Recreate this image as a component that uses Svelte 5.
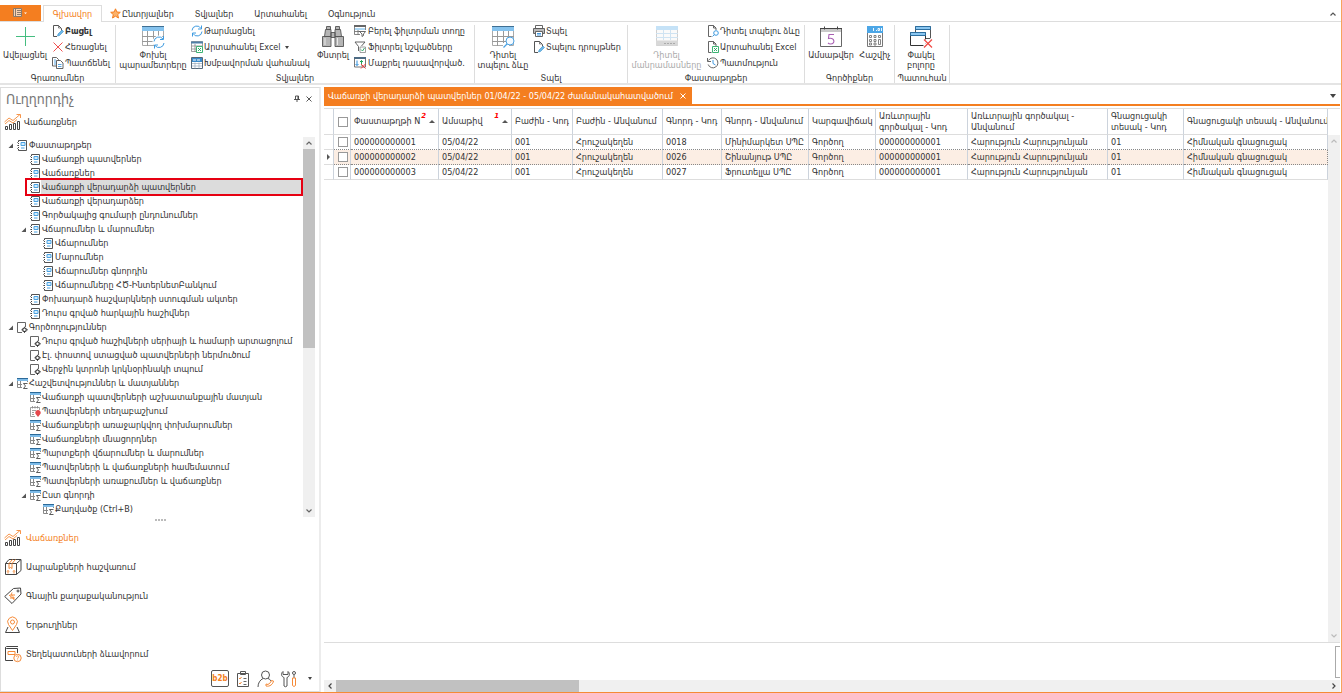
<script>
  const tabs = ['Գլխավոր', 'Ընտրյալներ', 'Տվյալներ', 'Արտահանել', 'Օգնություն'];
  const groups = [
    { id: 'records', title: 'Գրառումներ', parts: [
      { big: 'plus', id: 'add', lines: ['Ավելացնել'] },
      { small: [['open', 'Բացել', 'strong'], ['cross', 'Հեռացնել'], ['copy', 'Պատճենել']] }
    ] },
    { id: 'data', title: 'Տվյալներ', parts: [
      { big: 'params', id: 'params', lines: ['Փոխել', 'պարամետրերը'] },
      { small: [['refresh', 'Թարմացնել'], ['tablexls', 'Արտահանել Excel', 'drop'], ['grouping', 'Խմբավորման վահանակ']] },
      { big: 'find', id: 'find', lines: ['Փնտրել'] },
      { small: [['filterrow', 'Բերել ֆիլտրման տողը'], ['filter', 'Ֆիլտրել նշվածները'], ['clearsort', 'Մաքրել դասավորված.']] }
    ] },
    { id: 'print', title: 'Տպել', parts: [
      { big: 'preview', id: 'preview', lines: ['Դիտել', 'տպելու ձևը'] },
      { small: [['printer', 'Տպել'], ['printset', 'Տպելու դրույթներ']] }
    ] },
    { id: 'docs', title: 'Փաստաթղթեր', parts: [
      { big: 'details', id: 'details', lines: ['Դիտել', 'մանրամասները'], disabled: true },
      { small: [['docview', 'Դիտել տպելու ձևը'], ['docxls', 'Արտահանել Excel'], ['history', 'Պատմություն']] }
    ] },
    { id: 'tools', title: 'Գործիքներ', parts: [
      { big: 'calendar', id: 'calendar', lines: ['Ամսաթվեր'] },
      { big: 'calc', id: 'calc', lines: ['Հաշվիչ'] }
    ] },
    { id: 'window', title: 'Պատուհան', parts: [
      { big: 'closeall', id: 'closeall', lines: ['Փակել', 'բոլորը'] }
    ] }
  ];
  const tree = [
    [0, 'doc', 'Փաստաթղթեր', true],
    [1, 'doc', 'Վաճառքի պատվերներ'],
    [1, 'doc', 'Վաճառքներ'],
    [1, 'doc', 'Վաճառքի վերադարձի պատվերներ'],
    [1, 'doc', 'Վաճառքի վերադարձեր'],
    [1, 'doc', 'Գործակալից գումարի ընդունումներ'],
    [1, 'doc', 'Վճարումներ և մարումներ', true],
    [2, 'doc', 'Վճարումներ'],
    [2, 'doc', 'Մարումներ'],
    [2, 'doc', 'Վճարումներ գնորդին'],
    [2, 'doc', 'Վճարումները ՀԾ-ԻնտերնետԲանկում'],
    [1, 'doc', 'Փոխադարձ հաշվարկների ստուգման ակտեր'],
    [1, 'doc', 'Դուրս գրված հարկային հաշիվներ'],
    [0, 'task', 'Գործողություններ', true],
    [1, 'task', 'Դուրս գրված հաշիվների սերիայի և համարի արտացոլում'],
    [1, 'task', 'Էլ. փոստով ստացված պատվերների ներմուծում'],
    [1, 'task', 'Վերջին կտրոնի կրկնօրինակի տպում'],
    [0, 'report', 'Հաշվետվություններ և մատյաններ', true],
    [1, 'report', 'Վաճառքի պատվերների աշխատանքային մատյան'],
    [1, 'place', 'Պատվերների տեղաբաշխում'],
    [1, 'report', 'Վաճառքների առաջարկվող փոխմարումներ'],
    [1, 'report', 'Վաճառքների մնացորդներ'],
    [1, 'report', 'Պարտքերի վճարումներ և մարումներ'],
    [1, 'report', 'Պատվերների և վաճառքների համեմատում'],
    [1, 'report', 'Պատվերների առաքումներ և վաճառքներ'],
    [1, 'report', 'Ըստ գնորդի', true],
    [2, 'report', 'Քաղվածք (Ctrl+B)']
  ];
  const sections = [
    ['chart', 'Վաճառքներ'],
    ['box', 'Ապրանքների հաշվառում'],
    ['tag', 'Գնային քաղաքականություն'],
    ['pin', 'Երթուղիներ'],
    ['book', 'Տեղեկատուների ձևավորում']
  ];
  const columns = [
    { t: ['Փաստաթղթի N'], w: 88, sort: 2 },
    { t: ['Ամսաթիվ'], w: 73, sort: 1 },
    { t: ['Բաժին - Կոդ'], w: 61 },
    { t: ['Բաժին - Անվանում'], w: 90 },
    { t: ['Գնորդ - Կոդ'], w: 59 },
    { t: ['Գնորդ - Անվանում'], w: 87 },
    { t: ['Կարգավիճակ'], w: 67 },
    { t: ['Առևտրային', 'գործակալ - Կոդ'], w: 92 },
    { t: ['Առևտրային գործակալ -', 'Անվանում'], w: 140 },
    { t: ['Գնացուցակի', 'տեսակ - Կոդ'], w: 76 },
    { t: ['Գնացուցակի տեսակ - Անվանում'], w: 0 }
  ];
  const tail = ['Գործող', '000000000001', 'Հարություն Հարությունյան', '01', 'Հիմնական գնացուցակ'];
  const rows = [
    ['000000000001', '05/04/22', '001', 'Հրուշակեղեն', '0018', 'Մինիմարկետ ՍՊԸ', ...tail],
    ['000000000002', '05/04/22', '001', 'Հրուշակեղեն', '0026', 'Շինանյութ ՍՊԸ', ...tail],
    ['000000000003', '05/04/22', '001', 'Հրուշակեղեն', '0027', 'Ֆրուտելլա ՍՊԸ', ...tail]
  ];
  let selected = $state(3);
  let current = $state(1);
</script>

{#snippet sheet(accent)}
  <path d="M1.500 1.500h21v19h-21z" fill="#fff" stroke="#aaa" />
  <path d="M1 11.500h22M1 16.500h22M6.500 6v15M12.500 6v15M17.500 6v15" stroke="#999" fill="none" />
  <path d="M1 1h22v5H1z" fill={accent} />
  <path d="M1 1.500h22" stroke="#3f6f93" />
{/snippet}

{#snippet icon(name)}
  {#if name === 'plus'}
    <svg width="24" height="24" viewBox="0 0 24 24"><path d="M12.500 2v19M3 11.500h19" stroke="#45bd80" /></svg>
  {:else if name === 'params'}
    <svg width="24" height="24" viewBox="0 0 24 24">{@render sheet('#86c3ee')}<circle cx="18" cy="17" r="6.500" fill="#fff" /><path d="M13 16.500a5 5 0 0 1 9-2.500m.5-3v3.500H19M23 18a5 5 0 0 1-9 2.500m-.5 3V20H17" fill="none" stroke="#3f9be0" /></svg>
  {:else if name === 'preview'}
    <svg width="24" height="24" viewBox="0 0 24 24">{@render sheet('#86c3ee')}<path d="M12 18h6v5h-6z" fill="#fff" /><circle cx="19" cy="16" r="4" fill="#f4faff" stroke="#4ba2e2" /><path d="M16 19l-3.500 3.500" stroke="#4ba2e2" stroke-width="1.300" /></svg>
  {:else if name === 'find'}
    <svg width="24" height="24" viewBox="0 0 24 24" fill="#b5b5b5" stroke="#555" stroke-width=".9"><path d="M5.500 1.500h4v3h-4zM14.500 1.500h4v3h-4zM4.500 4.500H10v7H3.500zM14 4.500h5.500l1 7H14zM1.500 11.500h8.500v10H1.500zM14 11.500h8.500v10H14zM10 7.500h4v5h-4z" /><path d="M4 13v7M16.500 13v7" stroke="#eee" /></svg>
  {:else if name === 'details'}
    <svg width="24" height="24" viewBox="0 0 24 24"><path d="M1.500 1.500h21v19h-21z" fill="#fafafa" stroke="#d0d0d0" /><path d="M1 1h22v4H1z" fill="#c5e2f7" /><path d="M1 8.500h22M1 12.500h22M8.500 5v10M15.500 5v10" stroke="#cfe3f2" /><path d="M1 15.500h22v5H1z" fill="#d8d8d8" /><path d="M9 18.500h12" stroke="#aaa" stroke-dasharray="2 1" /></svg>
  {:else if name === 'calendar'}
    <svg width="24" height="24" viewBox="0 0 24 24"><path d="M1.500 3.500h21v18h-21z" fill="#fff" stroke="#666" /><path d="M2 3h20v4H2z" fill="#c9c9c9" /><path d="M1 3.500h22M5.500 1.500v3M18.500 1.500v3" stroke="#444" /><path d="M15 9.500h-5l-.5 4c6-1.500 7.500 5.500 2 5.500-1.500 0-2-.5-2.500-1" fill="none" stroke="#a95fb3" stroke-width="1.100" /></svg>
  {:else if name === 'calc'}
    <svg width="24" height="24" viewBox="0 0 24 24"><path d="M4.500 1.500h15v20h-15z" fill="#fff" stroke="#777" /><path d="M4 1h16v7H4z" fill="#4ca6e6" /><path d="M10.500 3v3M13 5.500h1M15 3.500h1.500v2H15zM18.500 3v3" stroke="#fff" fill="none" stroke-width=".9" /><path d="M6.500 10.500h2v2h-2zM11 10.500h2v2h-2zM15.500 10.500h2v2h-2zM6.500 14.500h2v2h-2zM11 14.500h2v2h-2zM15.500 14.500h2v5h-2zM6.500 18h2v2h-2zM11 18h2v2h-2z" fill="none" stroke="#777" stroke-width=".9" /></svg>
  {:else if name === 'closeall'}
    <svg width="24" height="24" viewBox="0 0 24 24" stroke="#555"><path d="M6.500 1.500h15v12h-15z" fill="#fff" /><path d="M6.500 1.500h15v3h-15z" fill="#8ac6f0" stroke="#2e6f9f" /><path d="M1.500 7.500h15v13h-15z" fill="#fff" stroke="#333" /><path d="M1.500 7.500h15v3h-15z" fill="#8ac6f0" stroke="#2e6f9f" /><path d="M14 14l9 9M23 14l-9 9" stroke="#fff" stroke-width="3" /><path d="M15 14.500l8 8M23 14.500l-8 8" stroke="#f04a44" stroke-width="1.200" /></svg>
  {:else if name === 'open' || name === 'printset'}
    <svg width="12" height="12" viewBox="0 0 12 12" fill="none"><path d="M5 11.500H1.500V.5h5L9.500 3.500v2" stroke="#555" /><path d="M6.500 .5V3H9" stroke="#555" stroke-width=".7" /><path d="M5.500 11l.5-2 4-4 1.500 1.500-4 4z" fill="#6bb8ea" stroke="#2880bd" stroke-width=".5" /></svg>
  {:else if name === 'cross'}
    <svg width="12" height="12" viewBox="0 0 12 12"><path d="M1.500 1.500l9 9M10.500 1.500l-9 9" stroke="#f05050" /></svg>
  {:else if name === 'copy'}
    <svg width="12" height="12" viewBox="0 0 12 12" stroke="#555" stroke-width=".9"><path d="M.5 .5h4l2 2V9h-6z" fill="#fff" /><path d="M4.500 3.500h4l2.500 2.500v5.500H4.500z" fill="#fff" /><path d="M6 7.500h3.500M6 9.500h3.500M2 3h2M2 5h2M2 7h2" stroke="#2e8fdc" stroke-width=".8" /></svg>
  {:else if name === 'refresh'}
    <svg width="12" height="12" viewBox="0 0 12 12"><path d="M1 5.500A4.800 4.800 0 0 1 10 3.500M10.500 .5v3.500H7M11 6.500A4.800 4.800 0 0 1 2 8.500M1.500 11.500V8H5" fill="none" stroke="#3f9be0" /></svg>
  {:else if name === 'tablexls' || name === 'docxls'}
    <svg width="12" height="12" viewBox="0 0 12 12" fill="none">{#if name === 'tablexls'}<path d="M.5 .5h11v10H.5zM.5 5h11M.5 8h11M4 3v8" stroke="#888" stroke-width=".8" /><path d="M0 .5h12v2H0z" fill="#4f7fa6" />{:else}<path d="M4.500 11.500h-3V.5h5L9 3v2M6.500 .5V3H9" stroke="#555" stroke-width=".9" />{/if}<path d="M5.500 5.500h6v6h-6z" fill="#fff" stroke="#3db473" /><path d="M7 7l3 3M10 7l-3 3" stroke="#22a45c" stroke-width=".9" /></svg>
  {:else if name === 'grouping'}
    <svg width="12" height="12" viewBox="0 0 12 12"><path d="M.5 .5h11v11H.5z" fill="#fff" stroke="#567" /><path d="M1 1h10v4H1z" fill="#3b8bca" /><path d="M2 3h3M6 3h3" stroke="#fff" /><path d="M1 6.500h10M1 9h10M4 5.500v6M8 5.500v6" stroke="#9ab" stroke-width=".7" /></svg>
  {:else if name === 'filterrow'}
    <svg width="12" height="12" viewBox="0 0 12 12" fill="none"><path d="M6 9.500H.5V.5h11V5M.5 6.500H6M4 5v4.500" stroke="#666" stroke-width=".8" /><path d="M0 0h12v2H0z" fill="#666" /><path d="M1 4h10" stroke="#5bb0ea" /><path d="M5.500 6.500h6l-2 2.500v1.500l-1.500 1V9z" fill="#fff" stroke="#444" stroke-width=".8" /></svg>
  {:else if name === 'filter'}
    <svg width="12" height="12" viewBox="0 0 12 12" fill="none"><path d="M1 1h10L7.500 5M1 1l3.500 4.500V10" stroke="#555" stroke-width=".9" /><path d="M6 6h5.500v5.500H6z" fill="#fff" stroke="#888" stroke-width=".8" /><path d="M7 8.500l1.500 1.500L10.500 7" stroke="#22a45c" stroke-width=".9" /></svg>
  {:else if name === 'clearsort'}
    <svg width="12" height="12" viewBox="0 0 12 12" fill="none"><path d="M.5 .5h11V10H.5z" stroke="#666" stroke-width=".9" /><path d="M0 0h12v2H0z" fill="#4d6b84" /><path d="M3 3.500v5M1.500 7L3 8.500 4.500 7" stroke="#2e8fdc" /><path d="M7.500 8.500v-5M6 5l1.500-1.500L9 5" stroke="#22a45c" /><path d="M7 7l4.500 4.500M11.500 7L7 11.500" stroke="#f0383c" /></svg>
  {:else if name === 'printer'}
    <svg width="12" height="12" viewBox="0 0 12 12" stroke="#555" stroke-width=".9"><path d="M2.500 .5h7v3h-7z" fill="#fff" /><path d="M.5 3.500h11v5H.5z" fill="#b9b9b9" /><path d="M2.500 6.500h7v5h-7z" fill="#fff" /><path d="M4 8.500h4M4 10h4" stroke="#2e8fdc" /></svg>
  {:else if name === 'docview'}
    <svg width="12" height="12" viewBox="0 0 12 12" fill="none"><path d="M4.500 11.500h-3V.5h5L9 3v2M6.500 .5V3H9" stroke="#555" stroke-width=".9" /><circle cx="9" cy="8" r="2.300" stroke="#3f9be0" /><path d="M7.500 9.500l-2 2" stroke="#3f9be0" /></svg>
  {:else if name === 'history'}
    <svg width="12" height="12" viewBox="0 0 12 12" fill="none"><path d="M1.500 3.500a5 5 0 1 1-.3 4M.5 1v3.500H4" stroke="#555" stroke-width=".9" /><path d="M6 3v3.500l2.500 1.500" stroke="#2e8fdc" stroke-width=".9" /></svg>
  {:else if name === 'doc'}
    <svg width="11" height="11" viewBox="0 0 11 11" fill="none"><path d="M1.500 .5h8v10h-8z" fill="#fff" stroke="#555" /><path d="M1.500 1v9" stroke="#fff" /><path d="M1.500 1v9" stroke="#444" stroke-dasharray="1 1" /><path d="M0 2.500h1M0 5.500h1M0 8.500h1" stroke="#888" /><path d="M4 2.500h4v3H4z" fill="#d4ecfb" stroke="#4ba2e2" /><path d="M4 8h3.500" stroke="#4ba2e2" /></svg>
  {:else if name === 'task'}
    <svg width="11" height="11" viewBox="0 0 11 11" fill="none"><path d="M5 10.500H.5V.5h8V5" stroke="#666" /><circle cx="7.500" cy="7.800" r="1.800" stroke="#333" stroke-width="1.200" /><path d="M7.500 4.800v1M7.500 9.800v1M4.500 7.800h1M9.800 7.800h1" stroke="#333" /></svg>
  {:else if name === 'report'}
    <svg width="11" height="11" viewBox="0 0 11 11" fill="none"><path d="M.5 1v8.500H5M3.500 3v6.500M.5 6.500H5M10.500 2v2" stroke="#888" /><path d="M0 1h11v2H0z" fill="#7dbbe8" /><path d="M0 .5h11" stroke="#2c6a99" /><path d="M10.500 5.500h-4L8.500 8l-2 2.500h4" stroke="#333" stroke-width=".8" /></svg>
  {:else if name === 'place'}
    <svg width="11" height="11" viewBox="0 0 11 11" fill="none"><path d="M5 10.500H.5v-9h9V4M2.500 0v2.500M5 0v2.500M7.500 0v2.500M2 4.500h4M2 6.500h2M2 8.500h2" stroke="#888" stroke-width=".8" /><path d="M8 11L5.500 7.800a2.700 2.700 0 1 1 5 0z" fill="#e5484c" /></svg>
  {:else if name === 'chart'}
    <svg width="18" height="18" viewBox="0 0 18 18" fill="none"><path d="M1.500 13.500h2v3h-2zM5.500 11.500h2v5h-2zM9.500 10.500h2v6h-2zM13.500 8.500h2v8h-2z" stroke="#444" /><path d="M.5 9l4.500-4 4 2.500L16 1.500M12.500 1.500H16.500V5M1 11l4-3.500L9 10l4-3.500" stroke="#f58a38" stroke-width=".9" /></svg>
  {:else if name === 'box'}
    <svg width="18" height="18" viewBox="0 0 18 18" fill="none"><path d="M1.500 5.500h11v11h-11zM1.500 5.500L5 1.500h12l-4.500 4M17 1.500v11l-4.500 4" stroke="#444" /><path d="M5 5.500v5l1.500-1 1.500 1v-5l3.500-4M5 5.500l3.500-4M4 15.500v-3M3 13.500l1-1 1 1M10 15.500v-3M9 13.500l1-1 1 1" stroke="#f58a38" /></svg>
  {:else if name === 'tag'}
    <svg width="18" height="18" viewBox="0 0 18 18" fill="none"><path d="M.7 9.500L9.500 1.500 16.500 1l.5 6-9 9.500z" stroke="#444" /><circle cx="14" cy="4" r="1" stroke="#444" /><path d="M5 8l5.500 4.500M6 11h4.500M8 5.500c-2 4 3 3 1.500 7M6 8h5" stroke="#f58a38" /></svg>
  {:else if name === 'pin'}
    <svg width="18" height="18" viewBox="0 0 18 18" fill="none"><path d="M4 11L1.500 16.500h14L13 11" stroke="#444" /><path d="M8.500 14.500L4.500 8.500a4.800 4.800 0 1 1 8 0z" stroke="#f58a38" fill="#fff" /><circle cx="8.500" cy="6" r="2" stroke="#f58a38" /></svg>
  {:else if name === 'book'}
    <svg width="18" height="18" viewBox="0 0 18 18" fill="none"><path d="M9 15.500H1.500V2.500M13.500 8V3.500h-11q-1-.5-1-1t1-1H14" stroke="#444" /><path d="M4 6.500h7v3H4z" stroke="#f58a38" /><circle cx="13.500" cy="13" r="3.700" stroke="#f58a38" fill="#fff" /><path d="M12.300 12c0-1.800 2.800-1.500 2.400 0-.2.800-1.200.8-1.200 1.800M13.500 14.500v1" stroke="#f58a38" stroke-width=".8" /></svg>
  {:else if name === 'clip'}
    <svg width="18" height="18" viewBox="0 0 18 18" fill="none"><path d="M3.500 3.500h11v13h-11zM6.500 1.500h5v3h-5z" stroke="#555" fill="#fff" /><path d="M9.500 8.500h3M9.500 11.500h3M9.500 14.500h3" stroke="#666" /><path d="M5 8l1 1 1.500-2M5 13l1 1 1.500-2" stroke="#f58a38" /></svg>
  {:else if name === 'agent'}
    <svg width="18" height="18" viewBox="0 0 18 18" fill="none"><circle cx="8.500" cy="5" r="4" stroke="#555" /><path d="M1 17c0-4 2-7 5-8.500M11 8.500c1.500.5 2 1 3 2.500" stroke="#555" /><path d="M9 16c4 1 7-2 7.500-5l-2-.5-1 2-2.500 2-2-.5z" stroke="#f58a38" /></svg>
  {:else if name === 'wrench'}
    <svg width="18" height="18" viewBox="0 0 18 18" fill="none"><path d="M3 1.500C0 4 2 7 4 7.500V16q1.500 1.500 3 0V7.500C10 6.500 10 3 8 1.500V4.500H3z" stroke="#555" /><circle cx="14" cy="3" r="1.500" stroke="#555" /><path d="M14 5v3" stroke="#555" /><path d="M12.500 8h3v7.500q-1.500 2-3 0z" stroke="#f58a38" /></svg>
  {/if}
{/snippet}

{#snippet chevron(dir)}
  <svg class="chev {dir}" width="8" height="8" viewBox="0 0 8 8"><path d="M1.500 5.500L4 3l2.500 2.500" fill="none" stroke="currentColor" stroke-width="1.200" /></svg>
{/snippet}

<div class="app">
  <nav class="tabs">
    <button class="file" aria-label="Ֆայլ">
      <svg width="16" height="10" viewBox="0 0 16 10"><path d="M.5 .5h8v8h-8z" fill="#f6d3b4" stroke="#8a7a6c" /><path d="M4 2.500h4M4 4.500h4M4 6.500h4" stroke="#8a7a6c" /><path d="M2.500 .5v8" stroke="#8a7a6c" /><path d="M11 4.500h3L12.500 6z" fill="#fff" /></svg>
    </button>
    {#each tabs as tab, i}
      <button class="tab" class:active={i === 0}>
        {#if i === 1}<svg width="11" height="11" viewBox="0 0 11 11"><path d="M5.500 .8l1.400 3.200 3.400.3-2.600 2.300.8 3.400-3-1.800-3 1.800.8-3.400L.7 4.300l3.400-.3z" fill="#fbb26a" stroke="#f47e20" /></svg>{/if}{tab}
      </button>
    {/each}
    <button class="fold" aria-label="Ծալել">{@render chevron('up')}</button>
  </nav>

  <div class="ribbon">
    {#each groups as g}
      <section class="group {g.id}">
        <div class="tools-row">
          {#each g.parts as p}
            {#if p.big}
              <button class="big {p.id}-btn" disabled={p.disabled}>
                {@render icon(p.big)}
                {#each p.lines as line}<span>{line}</span>{/each}
              </button>
            {:else}
              <div class="stack">
                {#each p.small as [ic, label, mod]}
                  <button class="small" class:strong={mod === 'strong'}>
                    {@render icon(ic)}<span>{label}</span>
                    {#if mod === 'drop'}<i class="caret"></i>{/if}
                  </button>
                {/each}
              </div>
            {/if}
          {/each}
        </div>
        <h2>{g.title}</h2>
      </section>
    {/each}
  </div>

  <div class="body">
    <aside>
      <header>
        <h1>Ուղղորդիչ</h1>
        <button aria-label="Ամրացնել"><svg width="8" height="8" viewBox="0 0 8 8"><path d="M2.500 1h3v3.500M2.500 1v3.500M1 4.500h6M4 4.500V7" fill="none" stroke="#444" stroke-width=".9" /><path d="M5 1v3.500" stroke="#444" /></svg></button>
        <button aria-label="Փակել"><svg width="8" height="8" viewBox="0 0 8 8"><path d="M1.500 1.500l5 5M6.500 1.500l-5 5" stroke="#444" stroke-width=".9" /></svg></button>
      </header>
      <div class="section-title">{@render icon('chart')}<span>Վաճառքներ</span></div>
      <div class="tree-box">
        <ul class="tree">
          {#each tree as [level, ic, label, open], i}
            <li class="l{level}" class:selected={i === selected}>
              {#if open}<svg class="expander" width="5" height="5" viewBox="0 0 5 5"><path d="M5 .5V5H.5z" fill="#555" /></svg>{/if}
              {@render icon(ic)}
              <button onclick={() => (selected = i)}>{label}</button>
            </li>
          {/each}
        </ul>
        <div class="vbar">
          {@render chevron('up')}<div class="thumb"></div>{@render chevron('down')}
        </div>
      </div>
      <div class="splitter"><i></i><i></i><i></i><i></i></div>
      <div class="sections">
        {#each sections as [ic, label], i}
          <button class:active={i === 0}>{@render icon(ic)}<span>{label}</span></button>
        {/each}
      </div>
      <div class="shortcuts">
        <button class="b2b">b2b</button>
        <button aria-label="Առաջադրանքներ">{@render icon('clip')}</button>
        <button aria-label="Գործակալներ">{@render icon('agent')}</button>
        <button aria-label="Կարգավորումներ">{@render icon('wrench')}</button>
        <button class="more" aria-label="Ավելին"><i class="caret"></i></button>
      </div>
    </aside>

    <main>
      <div class="doc-tabs">
        <button class="doc-tab">Վաճառքի վերադարձի պատվերներ 01/04/22 - 05/04/22 ժամանակահատվածում
          <svg width="8" height="8" viewBox="0 0 8 8"><path d="M1.500 1.500l5 5M6.500 1.500l-5 5" stroke="#fff" /></svg>
        </button>
        <button class="doc-list" aria-label="Պատուհաններ"><i class="caret large"></i></button>
      </div>
      <div class="grid-area">
        <div class="table-wrap">
          <table>
            <colgroup>
              <col style="width:10px" /><col style="width:17px" />
              {#each columns as c}<col style={c.w ? `width:${c.w}px` : ''} />{/each}
            </colgroup>
            <thead>
              <tr>
                <th></th>
                <th><input type="checkbox" aria-label="Բոլորը" /></th>
                {#each columns as c}
                  <th>
                    {#each c.t as line}<span class="line">{line}</span>{/each}
                    {#if c.sort}<sup>{c.sort}</sup><i class="sort"></i>{/if}
                  </th>
                {/each}
              </tr>
            </thead>
            <tbody>
              {#each rows as row, i}
                <tr class:current={i === current} onclick={() => (current = i)}>
                  <td>{#if i === current}<svg width="3" height="6" viewBox="0 0 3 6"><path d="M0 0l3 3-3 3z" fill="#555" /></svg>{/if}</td>
                  <td><input type="checkbox" aria-label={row[0]} /></td>
                  {#each row as cell}<td>{cell}</td>{/each}
                </tr>
              {/each}
            </tbody>
          </table>
        </div>
        <div class="vbar idle">{@render chevron('up')}{@render chevron('down')}</div>
      </div>
      <div class="footer-panel"><div class="stub"></div></div>
      <div class="hbar">{@render chevron('left')}<div class="thumb"></div>{@render chevron('right')}</div>
    </main>
  </div>
</div>

<style>
  :global(body) { background: #fff; }
  .app {
    box-sizing: border-box;
    display: flex;
    flex-direction: column;
    height: 100vh;
    overflow: hidden;
    border-right: 1px solid #f7a35c;
    border-bottom: 1px solid #f58a35;
    color: #333;
    font: 9px/10px 'DejaVu Sans Condensed', 'DejaVu Sans', sans-serif;
  }
  button {
    padding: 0;
    border: 0;
    background: none;
    color: inherit;
    font: inherit;
    white-space: nowrap;
  }
  svg { flex: none; display: block; }
  h1, h2, ul { margin: 0; padding: 0; font-weight: normal; }
  .caret { border: 2px solid transparent; border-top: 3px solid #444; border-bottom: 0; }
  .caret.large { border-width: 4px 3px 0; }
  .chev.down { transform: rotate(180deg); }
  .chev.left { transform: rotate(-90deg); }
  .chev.right { transform: rotate(90deg); }

  .tabs { display: flex; align-items: flex-end; height: 22px; border-bottom: 1px solid #ddd; box-sizing: border-box; }
  .file { display: flex; align-items: center; justify-content: center; width: 41px; height: 16px; background: #f47e20; }
  .tab { display: flex; align-items: center; height: 15px; margin-left: 21px; gap: 1px; }
  .tab:nth-child(3) { margin-left: 8px; }
  .tab.active { box-sizing: border-box; width: 59px; height: 17px; margin: 0 0 -1px 2px; justify-content: center; border: 1px solid #ddd; border-bottom: 0; background: #fff; color: #f47e20; }
  .fold { margin: 0 4px 3px auto; color: #555; }

  .ribbon { display: flex; height: 63px; flex: none; border-bottom: 2px solid #e4e4e4; box-sizing: border-box; }
  .group { display: flex; flex-direction: column; box-sizing: border-box; height: 58px; margin-top: 3px; border-right: 1px solid #ddd; }
  .records { width: 116px; }
  .data { width: 359px; }
  .print { width: 153px; }
  .docs { width: 177px; }
  .tools { width: 90px; }
  .window { width: 55px; }
  .group h2 { margin-top: auto; text-align: center; font-size: 9px; line-height: 10px; }
  .tools-row { display: flex; }
  .big { display: flex; flex: none; flex-direction: column; align-items: center; width: 66px; }
  .big svg { margin-bottom: 1px; }
  .big:disabled { color: #aaa; }
  .add-btn { width: 50px; }
  .params-btn { width: 74px; }
  .find-btn { width: 38px; }
  .preview-btn { width: 56px; }
  .details-btn { width: 77px; }
  .calendar-btn { width: 52px; }
  .calc-btn { width: 36px; }
  .closeall-btn { width: 52px; }
  .stack { display: flex; flex: none; flex-direction: column; padding-left: 2px; }
  .data .stack { width: 124px; box-sizing: border-box; padding-left: 1px; }
  .data .big + .stack:last-child { padding-left: 2px; }
  .data .stack:last-child .small { gap: 2px; }
  .small { display: flex; align-items: center; gap: 1px; height: 16px; margin-top: -2px; margin-bottom: 2px; }
  .small .caret { margin-left: 3px; }
  .strong { font-weight: bold; }

  .body { display: flex; flex: 1; min-height: 0; padding-top: 2px; gap: 3px; }
  aside { display: flex; flex-direction: column; box-sizing: border-box; width: 321px; flex: none; border: 1px solid #ddd; border-right: 2px solid #ececec; }
  aside header { display: flex; align-items: center; gap: 4px; height: 21px; padding: 0 6px 0 5px; }
  h1 { flex: 1; color: #777; font-size: 14px; line-height: 20px; }
  .section-title { display: flex; align-items: center; gap: 2px; height: 26px; padding: 0 0 2px 3px; }
  .tree-box { display: flex; flex: 1; min-height: 0; padding-right: 4px; }
  .tree { flex: 1; min-width: 0; overflow: hidden; list-style: none; padding-top: 1px; }
  .tree li { position: relative; display: flex; align-items: center; height: 14px; padding-left: 16px; }
  .tree .l1 { padding-left: 29px; }
  .tree .l2 { padding-left: 42px; }
  .tree button { flex: 1; height: 14px; padding-left: 1px; text-align: left; }
  .expander { position: absolute; left: 7px; }
  .l1 .expander { left: 20px; }
  .selected button { background: #dcdcdc; }
  .selected::after { content: ''; position: absolute; inset: -2px 0 -2px 24px; border: 2px solid #e60012; pointer-events: none; }
  .vbar { display: flex; flex-direction: column; align-items: center; gap: 2px; width: 12px; padding: 2px 0; background: #f0f0f0; color: #666; }
  .vbar .chev.down { margin-top: auto; }
  .vbar .thumb { width: 12px; height: 53%; background: #c1c1c1; }
  .idle { color: #bbb; }
  .splitter { display: flex; justify-content: center; align-items: center; gap: 1px; height: 6px; }
  .splitter i { width: 2px; height: 2px; background: #bbb; }
  .sections { display: flex; flex-direction: column; }
  .sections button { display: flex; align-items: center; gap: 4px; height: 29px; padding-left: 3px; }
  .sections .active { color: #f47e20; }
  .shortcuts { display: flex; align-items: center; justify-content: flex-end; gap: 5px; height: 21px; padding: 0 7px 2px 0; }
  .b2b { box-sizing: border-box; width: 18px; height: 17px; border: 1px solid #555; border-radius: 2px; color: #f47e20; font-weight: bold; font-size: 8px; }
  .more { display: flex; width: 9px; justify-content: flex-end; }

  main { display: flex; flex: 1; flex-direction: column; min-width: 0; padding-right: 1px; }
  .doc-tabs { display: flex; align-items: stretch; justify-content: space-between; height: 17px; flex: none; border-bottom: 2px solid #f47e20; }
  .doc-tab { display: flex; align-items: center; gap: 6px; padding: 0 5px 0 4px; background: #f47e20; color: #fff; }
  .doc-list { display: flex; align-items: center; padding-right: 4px; }
  .grid-area { display: flex; flex: 1; min-height: 0; margin-top: 2px; border-top: 1px solid #ddd; border-bottom: 1px solid #ddd; }
  .table-wrap { flex: 1; min-width: 0; overflow: hidden; }
  table { width: 100%; table-layout: fixed; border-collapse: separate; border-spacing: 0; }
  th, td { box-sizing: border-box; padding: 0 0 0 3px; border-right: 1px solid #ccd3dc; border-bottom: 1px solid #ddd; text-align: left; font-weight: normal; white-space: nowrap; overflow: hidden; }
  th { position: relative; height: 26px; }
  td { height: 15px; padding-bottom: 1px; }
  .line { display: block; line-height: 11px; }
  sup { position: absolute; top: 3px; right: 12px; color: #f00; font: italic bold 7px/8px 'DejaVu Sans', sans-serif; }
  .sort { position: absolute; top: 11px; right: 3px; border: 3px solid transparent; border-top: 0; border-bottom: 3px solid #555; }
  .current td { background: #fceee4; }
  .current td:not(:first-child), tr:has(+ .current) td:not(:first-child) { border-bottom: 1px dotted #888; }
  .current td:last-child { border-right: 1px dotted #888; }
  .current td:first-child { background: #fff; }
  input { display: block; box-sizing: border-box; width: 10px; height: 10px; margin: 0 0 0 1px; appearance: none; border: 1px solid #999; background: #fff; }
  .grid-area .vbar { margin-top: 26px; }
  .footer-panel { display: flex; justify-content: flex-end; align-items: center; height: 37px; flex: none; }
  .stub { width: 4px; height: 30px; border: 1px solid #aaa; border-right: 0; }
  .hbar { display: flex; align-items: center; gap: 2px; height: 12px; flex: none; padding: 0 2px; background: #f0f0f0; color: #444; }
  .hbar .thumb { width: 24%; height: 12px; background: #c1c1c1; }
  .hbar .chev.right { margin-left: auto; }
</style>
